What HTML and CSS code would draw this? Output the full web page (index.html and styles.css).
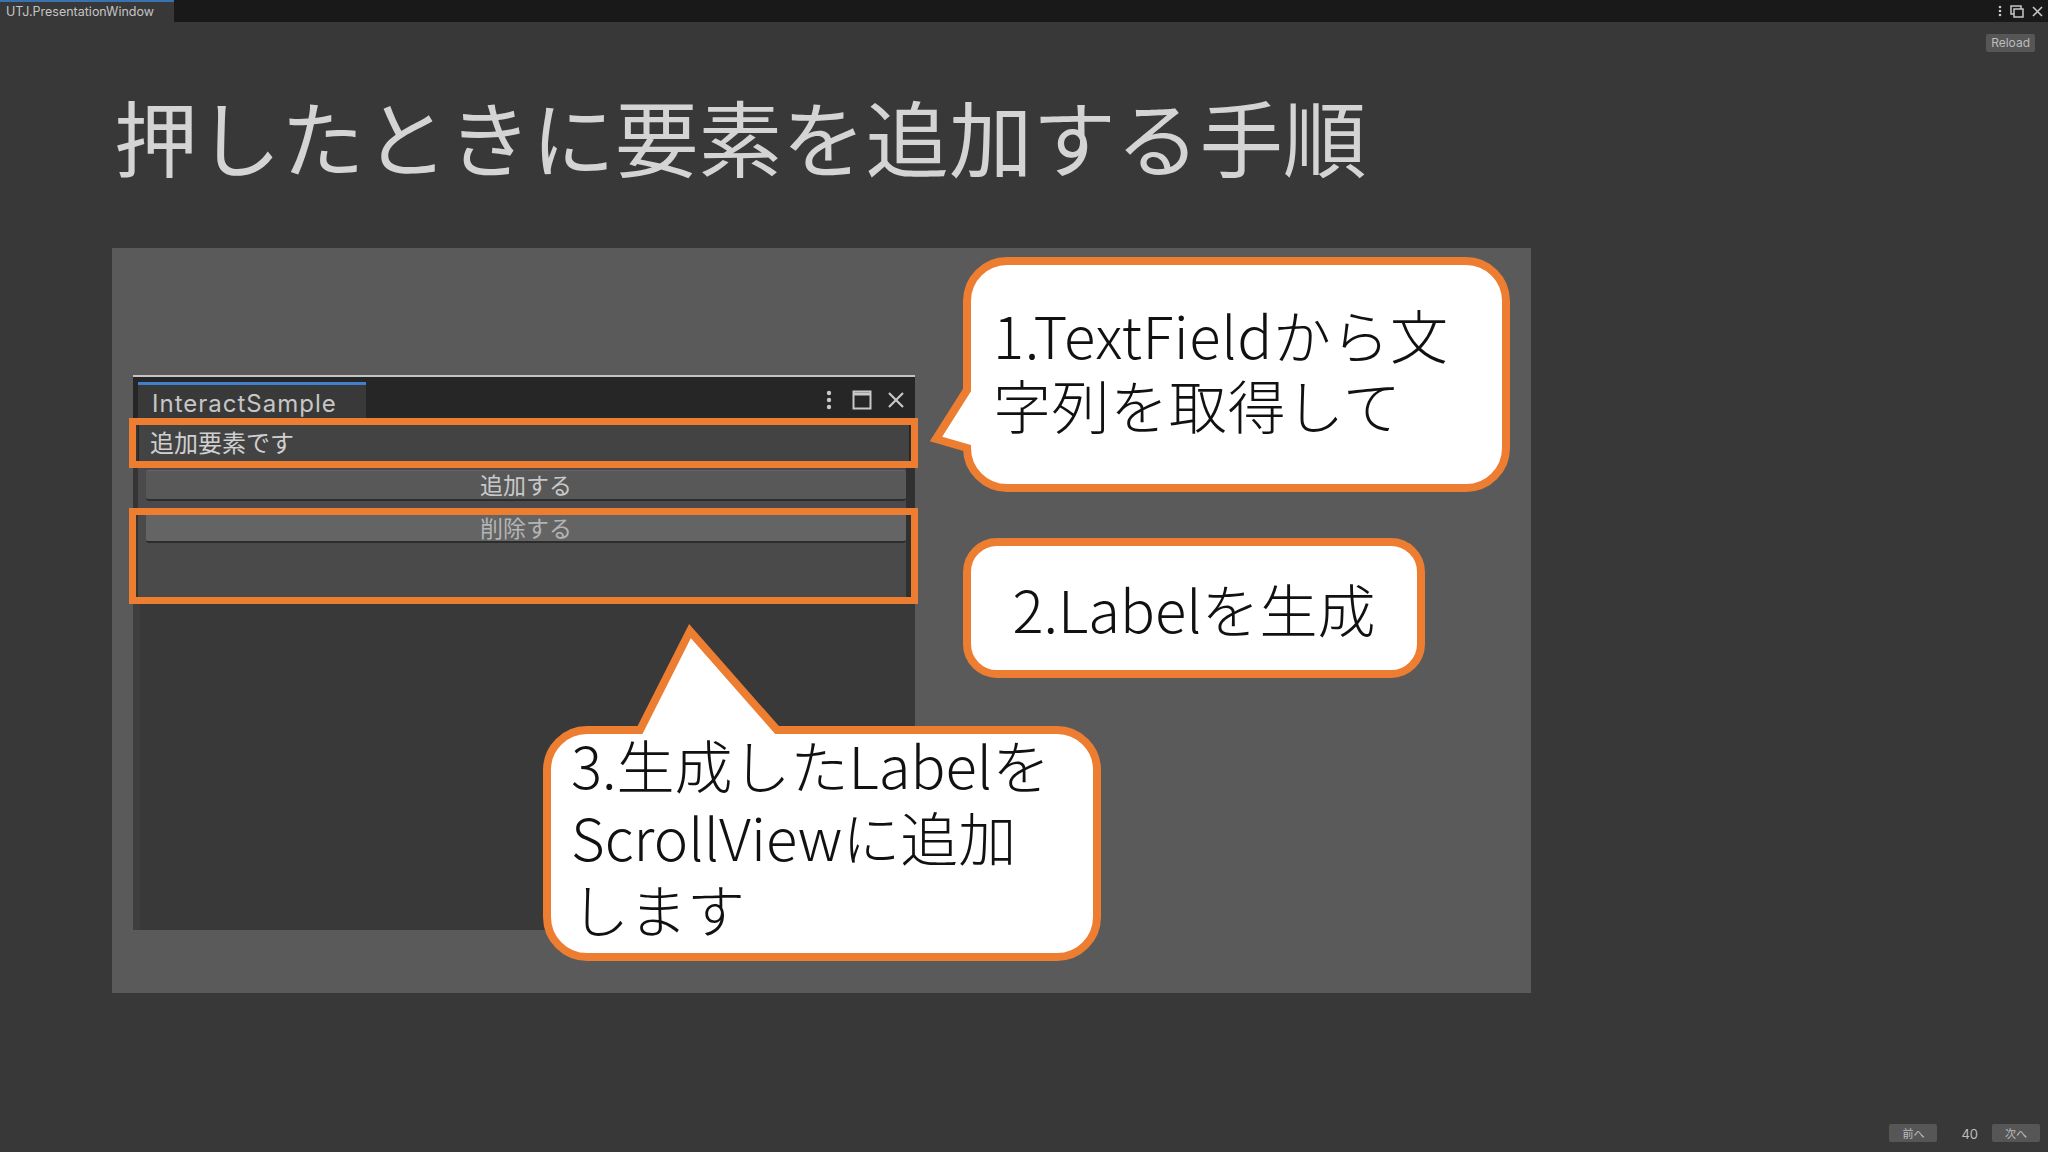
FILE: index.html
```html
<!DOCTYPE html>
<html lang="ja">
<head>
    <meta charset="UTF-8">
    <meta name="viewport" content="width=device-width, initial-scale=1.0">
    <title>UTJ.PresentationWindow</title>
    <link rel="stylesheet" href="styles.css">
</head>
<body>
    <div class="topbar">
        <div class="tab">UTJ.PresentationWindow</div>
        <div class="win-icons">
            <svg width="4" height="12" viewBox="0 0 4 12"><circle cx="2" cy="2" r="1.3" fill="#c8c8c8"/><circle cx="2" cy="6" r="1.3" fill="#c8c8c8"/><circle cx="2" cy="10" r="1.3" fill="#c8c8c8"/></svg>
            <svg width="14" height="13" viewBox="0 0 14 13"><rect x="1" y="1" width="10" height="8" fill="none" stroke="#c8c8c8" stroke-width="1.5"/><rect x="4" y="4" width="9" height="8" fill="#191919" stroke="#c8c8c8" stroke-width="1.5"/></svg>
            <svg width="11" height="11" viewBox="0 0 11 11"><path d="M1 1 L10 10 M10 1 L1 10" stroke="#c8c8c8" stroke-width="1.6"/></svg>
        </div>
    </div>

    <div class="main">
        <div class="toolbar">
            <span class="small-btn">Reload</span>
        </div>

        <h1 class="title">押したときに要素を追加する手順</h1>

        <div class="slide">
            <!-- Unity のウィンドウ -->
            <div class="uwin">
                <div class="uwin-head">
                    <div class="uwin-tab">InteractSample</div>
                    <div class="uwin-icons">
                        <svg width="6" height="20" viewBox="0 0 6 20"><circle cx="3" cy="3" r="2.2" fill="#c8c8c8"/><circle cx="3" cy="10" r="2.2" fill="#c8c8c8"/><circle cx="3" cy="17" r="2.2" fill="#c8c8c8"/></svg>
                        <svg width="20" height="20" viewBox="0 0 20 20"><rect x="1.5" y="1.5" width="17" height="17" fill="none" stroke="#c8c8c8" stroke-width="2"/><line x1="1.5" y1="4" x2="18.5" y2="4" stroke="#c8c8c8" stroke-width="3"/></svg>
                        <svg width="18" height="18" viewBox="0 0 18 18"><path d="M2 2 L16 16 M16 2 L2 16" stroke="#c8c8c8" stroke-width="2.2"/></svg>
                    </div>
                </div>
                <div class="uwin-body">
                    <div class="field">追加要素です</div>
                    <div class="ubtn">追加する</div>
                    <div class="ubtn ubtn-hover">削除する</div>
                </div>
                <div class="scroll"></div>
            </div>

            <!-- 強調枠 -->
            <div class="mark mark-field"></div>
            <div class="mark mark-label"></div>

            <!-- 吹き出し -->
            <svg class="bubbles" width="1419" height="745" viewBox="0 0 1419 745">
                <path d="M895 13 H1354 A40 40 0 0 1 1394 53 V200 A40 40 0 0 1 1354 240 H895 A40 40 0 0 1 855 200 L824 191 L855 142 V53 A40 40 0 0 1 895 13 Z"/>
                <rect x="855" y="294" width="454" height="132" rx="30" ry="30"/>
                <path d="M475 482 H528 L578 383 L665 482 H945 A40 40 0 0 1 985 522 V669 A40 40 0 0 1 945 709 H475 A40 40 0 0 1 435 669 V522 A40 40 0 0 1 475 482 Z"/>
            </svg>

            <div class="note note1">
                <span class="line">1.TextFieldから文</span>
                <span class="line">字列を取得して</span>
            </div>
            <div class="note note2">2.Labelを生成</div>
            <div class="note note3">
                <span class="line">3.生成したLabelを</span>
                <span class="line">ScrollViewに追加</span>
                <span class="line">します</span>
            </div>
        </div>
    </div>

    <div class="footer">
        <span class="small-btn nav-btn">前へ</span>
        <span class="page-no">40</span>
        <span class="small-btn nav-btn">次へ</span>
    </div>
</body>
</html>
```

FILE: styles.css
```css
body {
    margin: 0;
    width: 2048px;
    height: 1152px;
    background-color: #383838;
    display: flex;
    flex-direction: column;
    overflow: hidden;
    font-family: Inter, "Noto Sans CJK JP", sans-serif;
    color: #c8c8c8;
}
.topbar {
    height: 22px;
    background-color: #191919;
    display: flex;
    justify-content: space-between;
}
.topbar .tab {
    width: 174px;
    box-sizing: border-box;
    background-color: #383838;
    border-top: 2px solid #3a72b0;
    padding-left: 6px;
    font-size: 12.5px;
    line-height: 19px;
    color: #c4c4c4;
}
.win-icons {
    display: flex;
    align-items: center;
    gap: 8px;
    padding-right: 5px;
}
.main {
    flex: 1;
}
.toolbar {
    display: flex;
    justify-content: flex-end;
    padding: 12px 13px 0 0;
}
.small-btn {
    display: inline-block;
    height: 18px;
    line-height: 18px;
    padding: 0 5px;
    background-color: #565656;
    border-radius: 2px;
    font-size: 12px;
    color: #bdbdbd;
}
.title {
    margin: 41px 0 0 114px;
    font-family: "Noto Sans CJK JP", sans-serif;
    font-weight: 400;
    font-size: 83.5px;
    line-height: 84px;
    color: #d4d4d4;
}
.slide {
    position: relative;
    width: 1419px;
    height: 745px;
    margin: 71px 0 0 112px;
    background-color: #5a5a5a;
    overflow: hidden;
}
.uwin {
    width: 782px;
    height: 555px;
    margin: 127px 0 0 21px;
    box-sizing: border-box;
    border-top: 2px solid #c4c4c4;
    display: flex;
    flex-direction: column;
}
.uwin-head {
    height: 43px;
    box-sizing: border-box;
    background-color: #262626;
    padding-top: 5px;
    display: flex;
    justify-content: space-between;
}
.uwin-tab {
    width: 228px;
    margin-left: 5px;
    box-sizing: border-box;
    background-color: #393939;
    border-top: 3px solid #3f7fcc;
    padding: 4px 0 0 14px;
    font-size: 24px;
    line-height: 30px;
    letter-spacing: 1px;
    color: #c6c6c6;
}
.uwin-icons {
    display: flex;
    align-items: center;
    padding: 0 10px 2px 0;
    gap: 20px;
}
.uwin-icons svg:last-child {
    margin-left: -5px;
}
.uwin-body {
    height: 182px;
    box-sizing: border-box;
    background-color: #4a4a4a;
    border-left: 5px solid #343434;
    border-right: 9px solid #303030;
    padding-top: 4px;
}
.field {
    height: 38px;
    margin-right: -4px;
    box-sizing: border-box;
    background-color: #434343;
    border: 1px solid #252525;
    padding-left: 11px;
    font-family: "Noto Sans CJK JP", sans-serif;
    font-size: 24px;
    line-height: 34px;
    color: #d0d0d0;
}
.ubtn {
    height: 31px;
    margin: 8px 0 0 8px;
    box-sizing: border-box;
    background-color: #585858;
    border-top: 1px solid #656565;
    border-bottom: 2px solid #2c2c2c;
    border-radius: 3px;
    text-align: center;
    font-family: "Noto Sans CJK JP", sans-serif;
    font-size: 23px;
    line-height: 27px;
    color: #c8c8c8;
}
.ubtn-hover {
    margin-top: 12px;
    height: 30px;
    background-color: #646464;
    border-top-color: #6e6e6e;
    color: #b4b4b4;
}
.scroll {
    flex: 1;
    background-color: #393939;
    border-left: 7px solid #3e3e3e;
}
.mark {
    position: absolute;
    left: 17px;
    width: 789px;
    box-sizing: border-box;
    border: 7px solid #ed7d31;
}
.mark-field {
    top: 170px;
    height: 50px;
}
.mark-label {
    top: 260px;
    height: 96px;
}
.bubbles {
    position: absolute;
    left: 0;
    top: 0;
}
.bubbles path, .bubbles rect {
    fill: #ffffff;
    stroke: #ed7d31;
    stroke-width: 8;
}
.note {
    position: absolute;
    font-family: "Noto Sans CJK JP", sans-serif;
    font-weight: 300;
    font-size: 58px;
    color: #111111;
    white-space: nowrap;
}
.note .line {
    display: block;
}
.note1 {
    left: 881px;
    top: 51px;
    line-height: 70px;
    letter-spacing: 0.6px;
}
.note2 {
    left: 855px;
    top: 294px;
    width: 454px;
    height: 132px;
    display: flex;
    align-items: center;
    justify-content: center;
    line-height: 70px;
}
.note3 {
    left: 459px;
    top: 480px;
    line-height: 72px;
}
.footer {
    height: 28px;
    display: flex;
    align-items: flex-start;
    justify-content: flex-end;
    padding-right: 8px;
}
.nav-btn {
    width: 48px;
    padding: 0;
    text-align: center;
    font-family: "Noto Sans CJK JP", sans-serif;
    font-size: 11px;
}
.page-no {
    margin: 0 14px 0 24px;
    font-size: 13px;
    line-height: 20px;
    color: #bdbdbd;
}
```
